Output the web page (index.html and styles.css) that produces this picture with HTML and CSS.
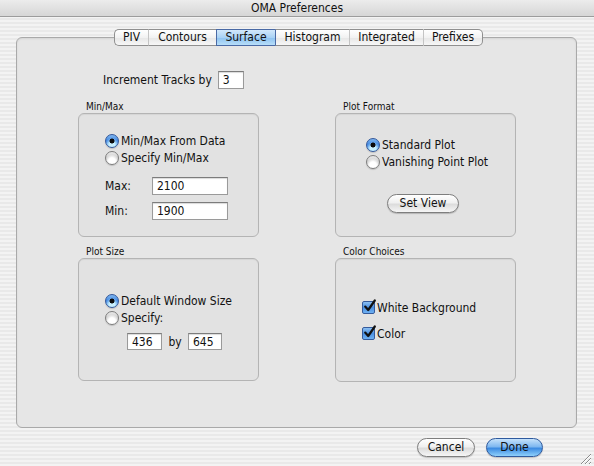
FILE: index.html
```html
<!DOCTYPE html>
<html>
<head>
<meta charset="utf-8">
<link rel="stylesheet" href="styles.css">
</head>
<body>
<div class="window">
  <div class="titlebar">OMA Preferences</div>
  <div class="content">
    <div class="tabs">
      <div class="tab w-piv">PIV</div>
      <div class="tab w-con">Contours</div>
      <div class="tab sel w-sur">Surface</div>
      <div class="tab w-his">Histogram</div>
      <div class="tab w-int">Integrated</div>
      <div class="tab w-pre">Prefixes</div>
    </div>
    <div class="panel">
      <div class="incr">
        <span class="lbl">Increment Tracks by</span>
        <span class="field f-incr">3</span>
      </div>
      <div class="grid">
        <div class="group">
          <div class="glabel">Min/Max</div>
          <div class="gbox box-minmax">
            <div class="opt"><span class="radio on"></span>Min/Max From Data</div>
            <div class="opt"><span class="radio"></span>Specify Min/Max</div>
            <div class="frow first"><span class="flbl">Max:</span><span class="field f-wide">2100</span></div>
            <div class="frow"><span class="flbl">Min:</span><span class="field f-wide">1900</span></div>
          </div>
        </div>
        <div class="group">
          <div class="glabel">Plot Format</div>
          <div class="gbox box-format">
            <div class="opt"><span class="radio on"></span>Standard Plot</div>
            <div class="opt"><span class="radio"></span>Vanishing Point Plot</div>
            <div class="btnrow"><span class="btn">Set View</span></div>
          </div>
        </div>
        <div class="group">
          <div class="glabel">Plot Size</div>
          <div class="gbox box-size">
            <div class="opt"><span class="radio on"></span>Default Window Size</div>
            <div class="opt"><span class="radio"></span>Specify:</div>
            <div class="sizerow"><span class="field f-s1">436</span><span class="by">by</span><span class="field f-s2">645</span></div>
          </div>
        </div>
        <div class="group">
          <div class="glabel">Color Choices</div>
          <div class="gbox box-color">
            <div class="chk"><span class="cbox"><svg width="15" height="15" viewBox="0 0 15 15"><path d="M3.2 7.6 L6.2 11 L12.8 1.5" fill="none" stroke="#111" stroke-width="2.2" stroke-linecap="round" stroke-linejoin="round"/></svg></span>White Background</div>
            <div class="chk"><span class="cbox"><svg width="15" height="15" viewBox="0 0 15 15"><path d="M3.2 7.6 L6.2 11 L12.8 1.5" fill="none" stroke="#111" stroke-width="2.2" stroke-linecap="round" stroke-linejoin="round"/></svg></span>Color</div>
          </div>
        </div>
      </div>
    </div>
    <div class="buttons">
      <span class="btn cancel">Cancel</span>
      <span class="btn done">Done</span>
    </div>
  </div>
  <svg class="grip" width="14" height="14" viewBox="0 0 14 14">
    <path d="M13 3 L3 13 M13 7 L7 13 M13 11 L11 13" stroke="#8a8a8a" stroke-width="1"/>
    <path d="M13 4 L4 13 M13 8 L8 13 M13 12 L12 13" stroke="#fff" stroke-width="1"/>
  </svg>
</div>
</body>
</html>
```
FILE: styles.css
```css
* { box-sizing: border-box; }
html, body { margin: 0; padding: 0; }
body {
  width: 594px;
  height: 466px;
  overflow: hidden;
  font-family: "DejaVu Sans Condensed", "DejaVu Sans", "Noto Sans", sans-serif;
  font-size: 12px;
  color: #111;
}
.window {
  position: relative;
  width: 594px;
  height: 466px;
  background: repeating-linear-gradient(#f3f3f3 0 2px, #e9e9e9 2px 4px);
}
.titlebar {
  height: 17px;
  line-height: 16px;
  text-align: center;
  font-size: 12px;
  color: #111;
  background: linear-gradient(#ececec, #d6d6d6);
  border-bottom: 1px solid #9c9c9c;
}
.content {
  padding: 12px 0 0 16px;
}
.tabs {
  position: relative;
  z-index: 2;
  display: flex;
  margin-left: 98px;
  height: 17px;
  margin-bottom: -9px;
}
.tab {
  height: 17px;
  line-height: 15px;
  text-align: center;
  font-size: 12px;
  border: 1px solid #8f8f8f;
  border-left: 1px solid #c4c4c4;
  border-right: none;
  background: linear-gradient(#ffffff, #f2f2f2 50%, #e6e6e6 51%, #f7f7f7);
}
.tab:first-child { border-left: 1px solid #8f8f8f; border-radius: 5px 0 0 5px; }
.tab:last-child { border-right: 1px solid #8f8f8f; border-radius: 0 5px 5px 0; }
.tab.sel {
  border-color: #4a6aa5;
  border-left-color: #4a6aa5;
  background: linear-gradient(#d2e8fb, #a9d2f5 50%, #8cc1f0 51%, #b7def9);
}
.tab.sel + .tab { border-left-color: #4a6aa5; }
.w-piv { width: 34px; }
.w-con { width: 68px; }
.w-sur { width: 59px; }
.w-his { width: 74px; }
.w-int { width: 74px; }
.w-pre { width: 60px; }
.panel {
  width: 561px;
  height: 391px;
  border: 1px solid #a9a9a9;
  border-radius: 6px;
  background: #e6e6e6;
  box-shadow: inset 0 1px 2px rgba(0,0,0,0.08);
  padding: 33px 0 0 61px;
}
.incr {
  display: flex;
  align-items: center;
  height: 18px;
  margin-left: 25px;
}
.incr .lbl { margin-right: 6px; }
.field {
  display: inline-block;
  height: 18px;
  line-height: 17px;
  padding-left: 4px;
  background: #fff;
  border: 1px solid #9a9a9a;
  border-top-color: #7c7c7c;
  box-shadow: inset 0 1px 1px rgba(0,0,0,0.15);
  font-size: 12px;
}
.f-incr { width: 26px; }
.grid {
  display: grid;
  grid-template-columns: 181px 181px;
  column-gap: 76px;
  row-gap: 9px;
  margin-top: 12px;
}
.glabel {
  font-size: 10px;
  line-height: 12px;
  height: 12px;
  padding-left: 8px;
}
.gbox {
  border: 1px solid #b4b4b4;
  border-radius: 6px;
  background: #e2e2e2;
  box-shadow: inset 0 1px 1px rgba(0,0,0,0.06);
}
.box-minmax { height: 124px; padding: 18px 0 0 26px; }
.box-format { height: 124px; padding: 22px 0 0 30px; }
.box-size { height: 123px; padding: 33px 0 0 26px; }
.box-color { height: 124px; padding: 40px 0 0 26px; }
.opt {
  display: flex;
  align-items: center;
  height: 17px;
}
.radio {
  display: inline-block;
  width: 14px;
  height: 14px;
  border-radius: 50%;
  border: 1px solid #7d7d7d;
  background: radial-gradient(circle at 50% 75%, #ffffff 0 30%, transparent 60%), linear-gradient(#e8e8e8, #cfcfcf 50%, #f2f2f2);
  box-shadow: 0 1px 1px rgba(0,0,0,0.15);
  margin-right: 2px;
  flex: none;
}
.radio.on {
  border-color: #33589b;
  background: radial-gradient(circle, #0b0b0b 0 2.2px, transparent 2.8px), radial-gradient(circle at 50% 85%, #c8f0ff 0 25%, transparent 60%), linear-gradient(#7fb6ef, #3f86e0 50%, #5aa4ee);
}
.frow {
  display: flex;
  align-items: center;
  height: 18px;
  margin-top: 7px;
}
.frow.first { margin-top: 11px; }
.flbl { width: 47px; }
.f-wide { width: 76px; }
.btnrow {
  margin-top: 24px;
  padding-left: 21px;
}
.btn {
  display: inline-block;
  height: 19px;
  line-height: 17px;
  text-align: center;
  font-size: 12px;
  border: 1px solid #7e7e7e;
  border-radius: 10px;
  background: linear-gradient(#ffffff, #f0f0f0 45%, #dcdcdc 55%, #f6f6f6);
  box-shadow: 0 1px 1px rgba(0,0,0,0.2);
}
.btnrow .btn { width: 72px; }
.sizerow {
  display: flex;
  align-items: center;
  margin-top: 7px;
  padding-left: 22px;
}
.f-s1 { width: 35px; height: 17px; line-height: 16px; }
.f-s2 { width: 34px; height: 17px; line-height: 16px; }
.by { width: 26px; text-align: center; }
.chk {
  display: flex;
  align-items: center;
  height: 17px;
  margin-bottom: 9px;
}
.cbox {
  position: relative;
  display: inline-block;
  width: 13px;
  height: 13px;
  border: 1px solid #355b9c;
  border-radius: 2px;
  background: linear-gradient(#8cc0f2, #4a8fe2 50%, #6fb1f2);
  margin-right: 2px;
  flex: none;
}
.cbox svg {
  position: absolute;
  left: -1px;
  top: -3px;
}
.buttons {
  display: flex;
  gap: 11px;
  margin-top: 10px;
  margin-left: 401px;
}
.cancel { width: 58px; }
.done {
  width: 57px;
  border-color: #2f5a9e;
  background: linear-gradient(#c6e2fb, #7fb8f0 45%, #3d8be2 55%, #8ed0fb);
}
.grip {
  position: absolute;
  right: 2px;
  bottom: 1px;
}
```
